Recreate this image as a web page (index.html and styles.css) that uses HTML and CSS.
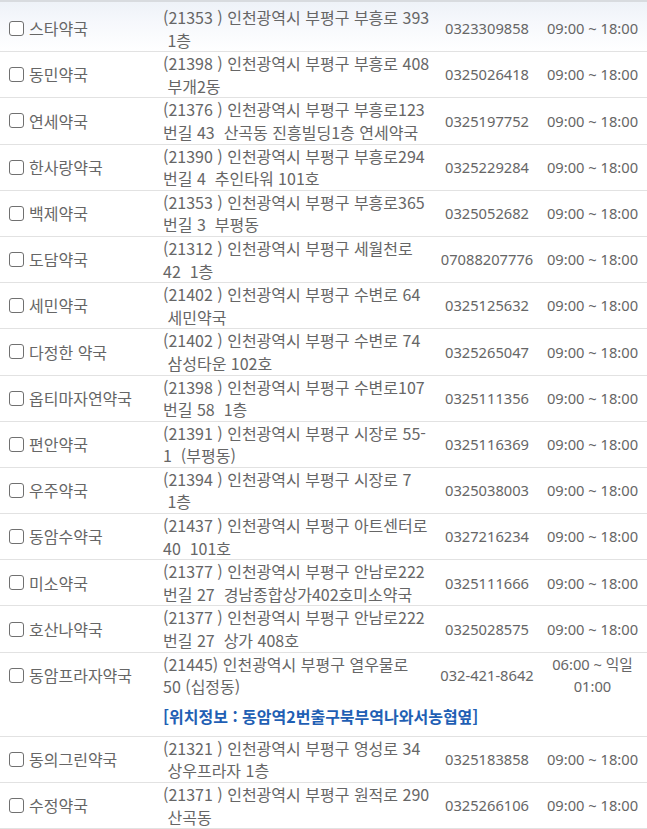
FILE: index.html
```html
<!DOCTYPE html>
<html lang="ko">
<head>
<meta charset="utf-8">
<title>약국 목록</title>
<link rel="stylesheet" href="styles.css">
</head>
<body>
<div class="list">
  <div class="row first">
    <div class="c-name"><span class="cb"></span>스타약국</div>
    <div class="c-addr">(21353 ) 인천광역시 부평구 부흥로 393<br>&nbsp;1층</div>
    <div class="c-tel">0323309858</div>
    <div class="c-time">09:00 ~ 18:00</div>
  </div>
  <div class="row">
    <div class="c-name"><span class="cb"></span>동민약국</div>
    <div class="c-addr">(21398 ) 인천광역시 부평구 부흥로 408<br>&nbsp;부개2동</div>
    <div class="c-tel">0325026418</div>
    <div class="c-time">09:00 ~ 18:00</div>
  </div>
  <div class="row">
    <div class="c-name"><span class="cb"></span>연세약국</div>
    <div class="c-addr">(21376 ) 인천광역시 부평구 부흥로123<br>번길 43 &nbsp;산곡동 진흥빌딩1층 연세약국</div>
    <div class="c-tel">0325197752</div>
    <div class="c-time">09:00 ~ 18:00</div>
  </div>
  <div class="row">
    <div class="c-name"><span class="cb"></span>한사랑약국</div>
    <div class="c-addr">(21390 ) 인천광역시 부평구 부흥로294<br>번길 4 &nbsp;추인타워 101호</div>
    <div class="c-tel">0325229284</div>
    <div class="c-time">09:00 ~ 18:00</div>
  </div>
  <div class="row">
    <div class="c-name"><span class="cb"></span>백제약국</div>
    <div class="c-addr">(21353 ) 인천광역시 부평구 부흥로365<br>번길 3 &nbsp;부평동</div>
    <div class="c-tel">0325052682</div>
    <div class="c-time">09:00 ~ 18:00</div>
  </div>
  <div class="row">
    <div class="c-name"><span class="cb"></span>도담약국</div>
    <div class="c-addr">(21312 ) 인천광역시 부평구 세월천로<br>42 &nbsp;1층</div>
    <div class="c-tel">07088207776</div>
    <div class="c-time">09:00 ~ 18:00</div>
  </div>
  <div class="row">
    <div class="c-name"><span class="cb"></span>세민약국</div>
    <div class="c-addr">(21402 ) 인천광역시 부평구 수변로 64<br>&nbsp;세민약국</div>
    <div class="c-tel">0325125632</div>
    <div class="c-time">09:00 ~ 18:00</div>
  </div>
  <div class="row">
    <div class="c-name"><span class="cb"></span>다정한 약국</div>
    <div class="c-addr">(21402 ) 인천광역시 부평구 수변로 74<br>&nbsp;삼성타운 102호</div>
    <div class="c-tel">0325265047</div>
    <div class="c-time">09:00 ~ 18:00</div>
  </div>
  <div class="row">
    <div class="c-name"><span class="cb"></span>옵티마자연약국</div>
    <div class="c-addr">(21398 ) 인천광역시 부평구 수변로107<br>번길 58 &nbsp;1층</div>
    <div class="c-tel">0325111356</div>
    <div class="c-time">09:00 ~ 18:00</div>
  </div>
  <div class="row">
    <div class="c-name"><span class="cb"></span>편안약국</div>
    <div class="c-addr">(21391 ) 인천광역시 부평구 시장로 55-<br>1 &nbsp;(부평동)</div>
    <div class="c-tel">0325116369</div>
    <div class="c-time">09:00 ~ 18:00</div>
  </div>
  <div class="row">
    <div class="c-name"><span class="cb"></span>우주약국</div>
    <div class="c-addr">(21394 ) 인천광역시 부평구 시장로 7<br>&nbsp;1층</div>
    <div class="c-tel">0325038003</div>
    <div class="c-time">09:00 ~ 18:00</div>
  </div>
  <div class="row">
    <div class="c-name"><span class="cb"></span>동암수약국</div>
    <div class="c-addr">(21437 ) 인천광역시 부평구 아트센터로<br>40 &nbsp;101호</div>
    <div class="c-tel">0327216234</div>
    <div class="c-time">09:00 ~ 18:00</div>
  </div>
  <div class="row">
    <div class="c-name"><span class="cb"></span>미소약국</div>
    <div class="c-addr">(21377 ) 인천광역시 부평구 안남로222<br>번길 27 &nbsp;경남종합상가402호미소약국</div>
    <div class="c-tel">0325111666</div>
    <div class="c-time">09:00 ~ 18:00</div>
  </div>
  <div class="row">
    <div class="c-name"><span class="cb"></span>호산나약국</div>
    <div class="c-addr">(21377 ) 인천광역시 부평구 안남로222<br>번길 27 &nbsp;상가 408호</div>
    <div class="c-tel">0325028575</div>
    <div class="c-time">09:00 ~ 18:00</div>
  </div>
  <div class="row no-line">
    <div class="c-name"><span class="cb"></span>동암프라자약국</div>
    <div class="c-addr">(21445) 인천광역시 부평구 열우물로<br>50 (십정동)</div>
    <div class="c-tel">032-421-8642</div>
    <div class="c-time">06:00 ~ 익일<br>01:00</div>
  </div>
  <div class="info-row">[위치정보 : 동암역2번출구북부역나와서농협옆]</div>
  <div class="row">
    <div class="c-name"><span class="cb"></span>동의그린약국</div>
    <div class="c-addr">(21321 ) 인천광역시 부평구 영성로 34<br>&nbsp;상우프라자 1층</div>
    <div class="c-tel">0325183858</div>
    <div class="c-time">09:00 ~ 18:00</div>
  </div>
  <div class="row">
    <div class="c-name"><span class="cb"></span>수정약국</div>
    <div class="c-addr">(21371 ) 인천광역시 부평구 원적로 290<br>&nbsp;산곡동</div>
    <div class="c-tel">0325266106</div>
    <div class="c-time">09:00 ~ 18:00</div>
  </div>
</div>
</body>
</html>
```
FILE: styles.css
```css
html, body {
  margin: 0;
  padding: 0;
  background: #fff;
}
body {
  font-family: "Noto Sans CJK KR", "Noto Sans", sans-serif;
  font-size: 16px;
  color: #666;
  overflow: hidden;
}
.list {
  border-top: 2px solid #d8dbdf;
}
.row {
  display: grid;
  grid-template-columns: 163px 273px 102px 1fr;
  align-items: center;
  line-height: 22.6px;
  border-bottom: 1px solid #e2e2e2;
}
.row.first {
  padding-top: 4px;
  background: linear-gradient(#eef2f8 0, #f6f8fc 20px, #fff 50px);
}
.row.no-line {
  border-bottom: none;
}
.c-name {
  display: flex;
  align-items: center;
  padding-left: 9px;
  white-space: nowrap;
}
.cb {
  flex: none;
  width: 13px;
  height: 13px;
  border: 1.5px solid #707070;
  border-radius: 3px;
  background: #fff;
  margin-right: 5px;
}
.c-addr {
  white-space: nowrap;
}
.c-tel, .c-time {
  font-family: "Noto Sans", "Noto Sans CJK KR", sans-serif;
  font-size: 14.7px;
  text-align: center;
  white-space: nowrap;
}
.info-row {
  padding: 7.5px 0 7.5px 163px;
  line-height: 23px;
  font-size: 16px;
  font-weight: bold;
  color: #1f5fb4;
  border-bottom: 1px solid #e2e2e2;
}
```
